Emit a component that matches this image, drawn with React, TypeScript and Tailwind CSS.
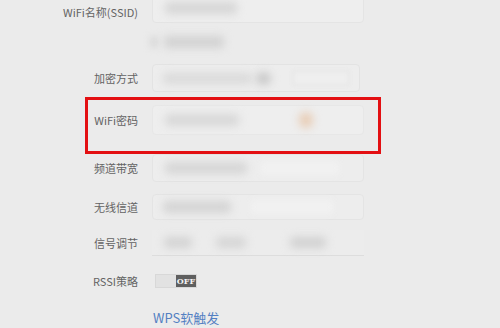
export default function App() {
  const font = { fontFamily: '"Noto Sans CJK SC", "Liberation Sans", sans-serif' }

  return (
    <div className="relative w-[500px] h-[328px] overflow-hidden bg-[#ebebeb]" style={font}>
      <div className="flex flex-col text-[11px] text-[#636363]">
        {/* WiFi名称 */}
        <div className="flex items-center h-[24px]">
          <div className="w-[138px] text-right">WiFi名称(SSID)</div>
          <div className="ml-[14px] w-[212px] h-[30px] -mt-[8px] bg-[#eeeeee] border border-[#e4e4e4] rounded-sm flex items-center px-[12px]">
            <div className="w-[72px] h-[12px] bg-[#d6d6d6] rounded blur-[4px]" />
          </div>
        </div>
        <div className="flex items-center h-[36px]">
          <div className="w-[138px]" />
          <div className="ml-[12px] flex items-center gap-[6px]">
            <div className="w-[8px] h-[12px] bg-[#dadada] blur-[3px]" />
            <div className="w-[60px] h-[12px] bg-[#d2d2d2] rounded blur-[4px]" />
          </div>
        </div>
        {/* 加密方式 */}
        <div className="flex items-center h-[36px]">
          <div className="w-[138px] text-right">加密方式</div>
          <div className="ml-[14px] w-[208px] h-[28px] bg-[#ededed] border border-[#e3e3e3] rounded-sm flex items-center px-[10px] gap-[4px]">
            <div className="w-[92px] h-[11px] bg-[#dadada] rounded blur-[4px]" />
            <div className="w-[16px] h-[13px] bg-[#c8c8c8] rounded-full blur-[4px]" />
            <div className="ml-[18px] w-[58px] h-[14px] border border-[#dedede] bg-[#efefef] blur-[2px]" />
          </div>
        </div>
        {/* WiFi密码 */}
        <div className="flex items-center h-[48px]">
          <div className="w-[138px] text-right">WiFi密码</div>
          <div className="ml-[14px] w-[212px] h-[30px] bg-[#eeeeee] border border-[#e7e7e7] rounded-sm flex items-center px-[12px]">
            <div className="w-[74px] h-[12px] bg-[#d8d8d8] rounded blur-[4px]" />
            <div className="ml-[60px] w-[14px] h-[16px] bg-[#e8cdb6] rounded-full blur-[4px]" />
          </div>
        </div>
        {/* 频道带宽 */}
        <div className="flex items-center h-[48px]">
          <div className="w-[138px] text-right">频道带宽</div>
          <div className="ml-[14px] w-[212px] h-[28px] bg-[#ededed] border border-[#e4e4e4] rounded-sm flex items-center px-[12px]">
            <div className="w-[82px] h-[12px] bg-[#d6d6d6] rounded blur-[4px]" />
            <div className="ml-[14px] w-[78px] h-[14px] bg-[#f1f1f1] blur-[3px]" />
          </div>
        </div>
        {/* 无线信道 */}
        <div className="flex items-center h-[30px]">
          <div className="w-[138px] text-right">无线信道</div>
          <div className="ml-[14px] w-[212px] h-[26px] bg-[#ededed] border border-[#e4e4e4] rounded-sm flex items-center px-[10px]">
            <div className="w-[68px] h-[12px] bg-[#d4d4d4] rounded blur-[4px]" />
            <div className="ml-[20px] w-[82px] h-[14px] bg-[#f1f1f1] blur-[3px]" />
          </div>
        </div>
        {/* 信号调节 */}
        <div className="flex items-center h-[42px]">
          <div className="w-[138px] text-right">信号调节</div>
          <div className="ml-[14px] w-[212px] h-[26px] bg-[#ececec] border-b border-[#dddddd] flex items-center px-[12px]">
            <div className="w-[28px] h-[11px] bg-[#d3d3d3] rounded blur-[4px]" />
            <div className="ml-[24px] w-[30px] h-[11px] bg-[#d5d5d5] rounded blur-[4px]" />
            <div className="ml-[44px] w-[36px] h-[11px] bg-[#d1d1d1] rounded blur-[4px]" />
          </div>
        </div>
        {/* RSSI策略 */}
        <div className="flex items-center h-[34px]">
          <div className="w-[138px] text-right">RSSI策略</div>
          <div className="ml-[17px] flex h-[14px] border border-[#d8d8d8]">
            <div className="w-[20px] bg-[#e2e2e2]" />
            <div
              className="w-[20px] bg-[#5f5f5f] text-[#f4f4f4] text-[8px] font-bold leading-[13px] text-center"
              style={{ fontFamily: '"DejaVu Serif", serif' }}
            >
              OFF
            </div>
          </div>
        </div>
        {/* WPS */}
        <div className="flex items-center h-[40px]">
          <div className="w-[138px]" />
          <div className="ml-[15px] text-[13px] text-[#5380c2]">WPS软触发</div>
        </div>
      </div>

      {/* annotation */}
      <div className="absolute left-[85px] top-[97px] w-[296px] h-[57px] border-[3px] border-[#e30f12]" />
    </div>
  )
}
